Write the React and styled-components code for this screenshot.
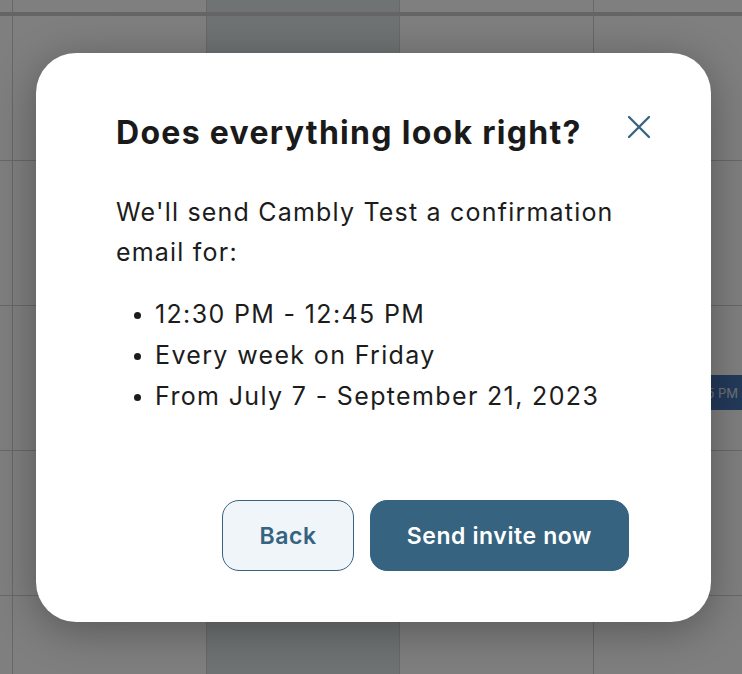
import styled, { createGlobalStyle } from 'styled-components';

const GlobalStyle = createGlobalStyle`
  html, body {
    margin: 0;
    padding: 0;
  }
  body {
    width: 742px;
    height: 674px;
    overflow: hidden;
    font-family: Inter, 'Noto Sans', sans-serif;
  }
`;

const columns = [
  { width: '12px' },
  { width: '194px' },
  { width: '193px', today: true },
  { width: '194px' },
  { width: '149px', event: 2 },
];
const rows = [0, 1, 2, 3];

export default function App() {
  return (
    <>
      <GlobalStyle />
      <Page>
        {/* calendar behind the dialog */}
        <Calendar>
          {columns.map((col, c) => (
            <Column key={c} w={col.width} today={col.today} first={c === 0}>
              <HeaderCell />
              {rows.map(r => (
                <Cell key={r}>
                  {col.event === r && <Event>12:30 - 12:45 PM</Event>}
                </Cell>
              ))}
            </Column>
          ))}
        </Calendar>
        <Overlay>
          <Dialog>
            <TitleRow>
              <Title>Does everything look right?</Title>
              <CloseBtn aria-label="Close">
                <svg width="24" height="24" viewBox="0 0 24 24" fill="none">
                  <path
                    d="M2 2 L22 22 M22 2 L2 22"
                    stroke="#36637f"
                    strokeWidth="2.3"
                    strokeLinecap="round"
                  />
                </svg>
              </CloseBtn>
            </TitleRow>
            <Text>We'll send Cambly Test a confirmation email for:</Text>
            <List>
              <li>12:30 PM - 12:45 PM</li>
              <li>Every week on Friday</li>
              <li>From July 7 - September 21, 2023</li>
            </List>
            <Actions>
              <Button variant="secondary">Back</Button>
              <Button>Send invite now</Button>
            </Actions>
          </Dialog>
        </Overlay>
      </Page>
    </>
  );
}

const Page = styled.div`
  position: relative;
  width: 742px;
  height: 674px;
  overflow: hidden;
  background: #fff;
`;

const Calendar = styled.div`
  display: flex;
  height: 100%;
`;

const Column = styled.div`
  box-sizing: border-box;
  flex: 0 0 ${({ w }) => w};
  display: flex;
  flex-direction: column;
  border-left: ${({ first }) => (first ? 'none' : '1px solid #d0d0d0')};
  background: ${({ today }) => (today ? '#dfe6e9' : '#fff')};
`;

const HeaderCell = styled.div`
  height: 12px;
  border-bottom: 4px solid #cbcbcb;
  margin-left: -1px;
`;

const Cell = styled.div`
  position: relative;
  box-sizing: border-box;
  height: 145px;
  flex: none;
  border-bottom: 1px solid #d0d0d0;
`;

const Event = styled.div`
  position: absolute;
  top: 69px;
  left: 8px;
  right: 0;
  height: 35px;
  background: #4674b4;
  color: #dde5ee;
  font-size: 13px;
  display: flex;
  align-items: center;
  justify-content: flex-end;
  padding-right: 4px;
  border-radius: 3px 0 0 3px;
`;

const Overlay = styled.div`
  position: absolute;
  inset: 0;
  background: rgba(0, 0, 0, 0.5);
  display: flex;
  align-items: flex-start;
  justify-content: flex-start;
  padding: 53px 0 0 36px;
`;

const Dialog = styled.div`
  box-sizing: border-box;
  width: 675px;
  height: 569px;
  background: #fff;
  border-radius: 40px;
  padding: 60px 82px 51px 80px;
  display: flex;
  flex-direction: column;
  box-shadow: 0 8px 44px rgba(0, 0, 0, 0.32);
  color: #1c1c1c;
`;

const TitleRow = styled.div`
  display: flex;
  align-items: flex-start;
  justify-content: space-between;
`;

const Title = styled.h2`
  margin: 0;
  font-size: 32px;
  line-height: 40px;
  font-weight: 700;
  letter-spacing: 1.3px;
  color: #1a1a1a;
`;

const CloseBtn = styled.button`
  border: none;
  background: none;
  padding: 0;
  margin: 2px -22px 0 0;
  cursor: pointer;
  display: flex;
`;

const Text = styled.p`
  margin: 39px 0 0;
  font-size: 25px;
  line-height: 40px;
  letter-spacing: 1.2px;
`;

const List = styled.ul`
  margin: 22px 0 0;
  padding-left: 39px;
  font-size: 25px;
  line-height: 41px;
  letter-spacing: 1.35px;

  li::marker {
    font-size: 22px;
  }
`;

const Actions = styled.div`
  margin-top: auto;
  display: flex;
  justify-content: flex-end;
  gap: 16px;
`;

const Button = styled.button`
  box-sizing: border-box;
  height: 71px;
  padding: 0 36px;
  border-radius: 17px;
  font-family: Inter, 'Noto Sans', sans-serif;
  font-size: 23px;
  font-weight: 600;
  letter-spacing: 0.6px;
  cursor: pointer;
  border: 1px solid #36637f;
  color: ${({ variant }) => (variant === 'secondary' ? '#36637f' : '#fff')};
  background: ${({ variant }) => (variant === 'secondary' ? '#eff5f9' : '#36637f')};
`;
